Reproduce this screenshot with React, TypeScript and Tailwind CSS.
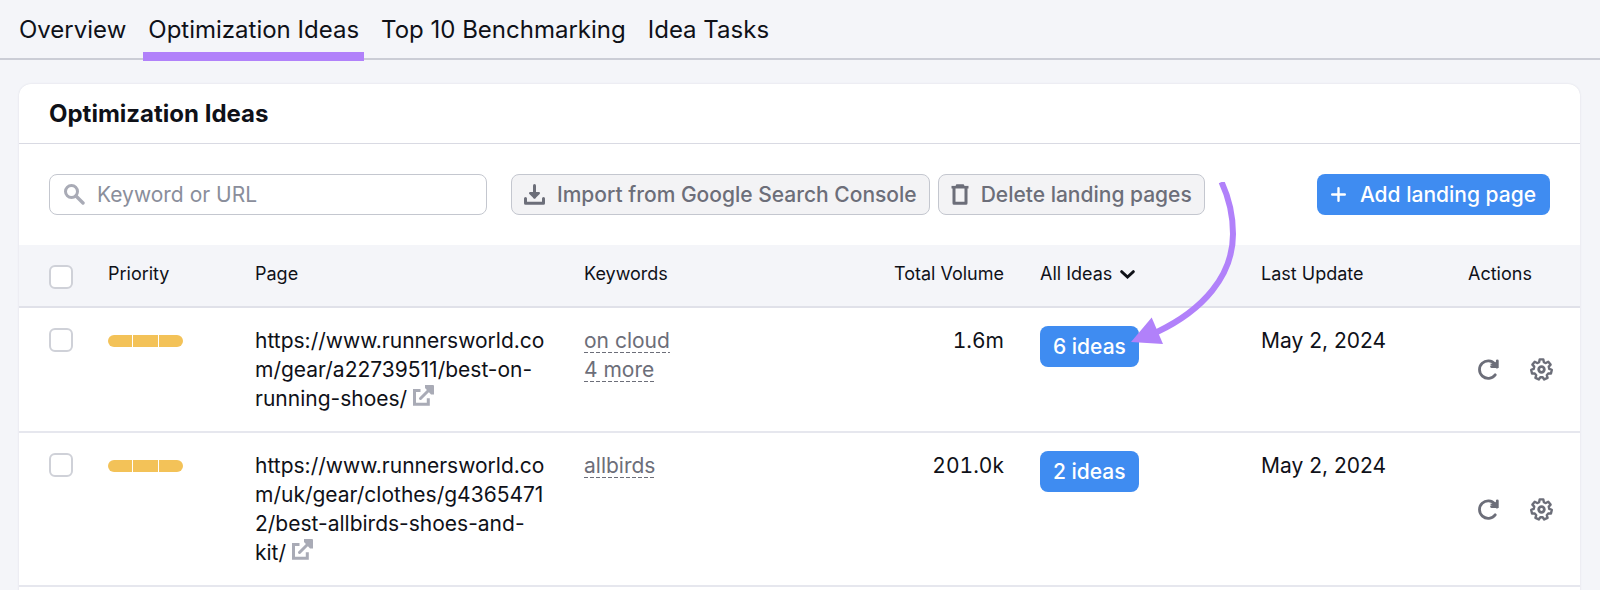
import { useState } from "react";
import type { ReactNode } from "react";

type IdeaRow = {
  id: string;
  url: string;
  keywords: string[];
  volume: string;
  ideas: number;
  updated: string;
  highlighted?: boolean;
};

const tabs = [
  "Overview",
  "Optimization Ideas",
  "Top 10 Benchmarking",
  "Idea Tasks",
];

const rows: IdeaRow[] = [
  {
    id: "on-running-shoes",
    url: "https://www.runnersworld.com/gear/a22739511/best-on-running-shoes/",
    keywords: ["on cloud", "4 more"],
    volume: "1.6m",
    ideas: 6,
    updated: "May 2, 2024",
    highlighted: true,
  },
  {
    id: "allbirds-shoes",
    url: "https://www.runnersworld.com/uk/gear/clothes/g43654712/best-allbirds-shoes-and-kit/",
    keywords: ["allbirds"],
    volume: "201.0k",
    ideas: 2,
    updated: "May 2, 2024",
  },
];

function SearchIcon() {
  return (
    <svg width="21" height="21" viewBox="0 0 21 21" fill="none" stroke="#a9abb6" aria-hidden="true">
      <circle cx="7.5" cy="7.5" r="6" strokeWidth="3" />
      <path d="M12 12l7 7" strokeWidth="3.4" strokeLinecap="round" />
    </svg>
  );
}

function ImportIcon() {
  return (
    <svg width="21" height="21" viewBox="0 0 21 21" fill="none" stroke="#6c6e79" strokeWidth="3" strokeLinecap="round" strokeLinejoin="round" aria-hidden="true">
      <path d="M10.5 1.5V13" />
      <path d="M6.2 9.2l4.3 4.3l4.3-4.3z" fill="#6c6e79" strokeWidth="2.4" />
      <path d="M1.5 14.5v4.7h18v-4.7" />
    </svg>
  );
}

function TrashIcon() {
  return (
    <svg width="18" height="21" viewBox="0 0 18 21" fill="none" stroke="#6c6e79" aria-hidden="true">
      <path d="M6 1.5h6" strokeWidth="2.5" strokeLinecap="round" />
      <path d="M0.5 3.2h17" strokeWidth="2.6" />
      <path d="M3 3.5v15.7h12V3.5" strokeWidth="3" strokeLinejoin="round" />
    </svg>
  );
}

function PlusIcon() {
  return (
    <svg width="15" height="15" viewBox="0 0 15 15" fill="none" stroke="white" strokeWidth="2.4" strokeLinecap="round" aria-hidden="true">
      <path d="M7.5 1.2v12.6M1.2 7.5h12.6" />
    </svg>
  );
}

function ChevronIcon() {
  return (
    <svg width="15" height="9" viewBox="0 0 15 9" fill="none" stroke="#0f1118" strokeWidth="2.8" strokeLinecap="round" aria-hidden="true">
      <path d="M1.6 1.6l5.9 5.4l5.9-5.4" />
    </svg>
  );
}

function ExternalIcon() {
  return (
    <svg className="inline-block align-baseline" width="21" height="21" viewBox="0 0 21 21" aria-hidden="true">
      <path d="M7.5 5.5h-6v13.8h13.800v-6" fill="none" stroke="#a9abb6" strokeWidth="3" />
      <path d="M7.5 13.5L17 4" fill="none" stroke="#a9abb6" strokeWidth="3" strokeLinecap="round" />
      <path d="M12 0H20a1 1 0 0 1 1 1v8.500h-3l-6-6.500z" fill="#a9abb6" />
    </svg>
  );
}

function RefreshIcon() {
  return (
    <svg width="21" height="21" viewBox="0 0 21 21" fill="none" stroke="#6c6e79" strokeWidth="2.8" strokeLinecap="round" aria-hidden="true">
      <path d="M17.2 15.8A8.7 8.7 0 1 1 17 5.2" />
      <path d="M19.3 1.8V7.6H13.5" />
      <path d="M15 5.5l3-1v3z" />
    </svg>
  );
}

// Seven teeth: each one is an outer edge joined to the next by a shallow valley.
const gearPath =
  Array.from({ length: 7 }, (_, i) => {
    const center = (i * 2 * Math.PI) / 7 - Math.PI / 2;
    return [
      [7.8, -0.3],
      [10.3, -0.18],
      [10.3, 0.18],
      [7.8, 0.3],
    ]
      .map(([r, a], j) => {
        const x = 11.5 + r * Math.cos(center + a);
        const y = 11.5 + r * Math.sin(center + a);
        return `${i + j === 0 ? "M" : "L"}${x.toFixed(2)} ${y.toFixed(2)}`;
      })
      .join("");
  }).join("") + "Z";

function GearIcon() {
  return (
    <svg width="23" height="23" viewBox="0 0 23 23" fill="none" stroke="#6c6e79" strokeWidth="2.4" strokeLinejoin="round" aria-hidden="true">
      <path d={gearPath} />
      <circle cx="11.5" cy="11.5" r="2.8" strokeWidth="2.8" />
    </svg>
  );
}

function PointerArrow() {
  return (
    <svg
      className="pointer-events-none absolute -top-36 left-[91px] z-10"
      width="108"
      height="164"
      viewBox="0 2 108 164"
      fill="none"
      aria-hidden="true"
    >
      <path d="M90.5 2C98 18 102 36 102 54C102 96 72 130 26 152" stroke="#b181fa" strokeWidth="6" />
      <path d="M0 162L20.7 137.5L32 164z" fill="#b181fa" />
    </svg>
  );
}

function Checkbox({ label }: { label: string }) {
  return (
    <input
      type="checkbox"
      aria-label={label}
      className="block size-6 appearance-none rounded-md border-2 border-[#cfd1d8] bg-white checked:bg-[#3f8cf1]"
    />
  );
}

function ToolButton({ icon, children }: { icon: ReactNode; children: ReactNode }) {
  return (
    <button
      type="button"
      className="flex h-[41px] items-center gap-3 rounded-lg border border-[#c4c7cf] bg-[#f3f3f5] px-3 font-medium whitespace-nowrap text-[#6c6e79]"
    >
      {icon}
      {children}
    </button>
  );
}

function Priority() {
  return (
    <div role="img" aria-label="High priority" className="mt-[9px] flex h-3 w-[75px] gap-px overflow-hidden rounded-full">
      <span className="flex-1 bg-[#f3c258]" />
      <span className="flex-1 bg-[#f3c258]" />
      <span className="flex-1 bg-[#f3c258]" />
    </div>
  );
}

export default function App() {
  const [activeTab, setActiveTab] = useState("Optimization Ideas");
  const [query, setQuery] = useState("");

  return (
    <div className="min-h-screen bg-[#f4f5f9] font-[Inter,sans-serif] text-[21px] leading-[29px] text-[#0f1118]">
      <nav className="flex h-[60px] gap-3 border-b-2 border-[#cbcdd6] px-[14px] text-2xl">
        {tabs.map((tab) => (
          <button
            key={tab}
            type="button"
            onClick={() => setActiveTab(tab)}
            className={`h-[61px] border-b-9 px-[5px] pt-[7px] whitespace-nowrap ${
              tab === activeTab ? "border-[#b181fa]" : "border-transparent"
            }`}
          >
            {tab}
          </button>
        ))}
      </nav>

      <main className="pt-6 pr-5 pl-[19px]">
        <section className="rounded-t-xl bg-white shadow-[0_0_2px_#d9dae3]">
          <h1 className="border-b border-[#d9dae3] px-[30px] pt-[14px] pb-[13px] text-2xl font-bold">
            Optimization Ideas
          </h1>

          <div className="flex items-center px-[30px] py-[30px]">
            <label className="flex h-[41px] w-[438px] items-center gap-3 rounded-lg border border-[#c4c7cf] px-[14px]">
              <SearchIcon />
              <input
                type="text"
                aria-label="Keyword or URL"
                placeholder="Keyword or URL"
                value={query}
                onChange={(event) => setQuery(event.target.value)}
                className="min-w-0 flex-1 outline-none placeholder:text-[#8a8e9b]"
              />
            </label>
            <div className="ml-6 flex gap-2">
              <ToolButton icon={<ImportIcon />}>Import from Google Search Console</ToolButton>
              <ToolButton icon={<TrashIcon />}>Delete landing pages</ToolButton>
            </div>
            <button
              type="button"
              className="ml-auto flex h-[41px] items-center gap-[14px] rounded-lg bg-[#3f8cf1] px-[14px] font-medium whitespace-nowrap text-white"
            >
              <PlusIcon />
              Add landing page
            </button>
          </div>

          <table className="w-full table-fixed border-collapse text-left">
            <thead>
              <tr className="h-[62px] border-b-2 border-[#e0e1e9] bg-[#f4f5f9] align-top text-lg *:font-normal">
                <th className="w-[71px] pt-5 pl-[30px]">
                  <Checkbox label="Select all pages" />
                </th>
                <th className="w-[147px] px-[18px] pt-[15px]">Priority</th>
                <th className="w-[329px] px-[18px] pt-[15px]">Page</th>
                <th className="px-[18px] pt-[15px]">Keywords</th>
                <th className="w-[180px] px-[18px] pt-[15px] text-right">Total Volume</th>
                <th className="w-[221px] px-[18px] pt-[15px]">
                  <button type="button" className="flex items-center gap-2">
                    All Ideas
                    <ChevronIcon />
                  </button>
                </th>
                <th className="w-[207px] px-[18px] pt-[15px]">Last Update</th>
                <th className="w-[130px] px-[18px] pt-[15px]">Actions</th>
              </tr>
            </thead>
            <tbody>
              {rows.map((row) => (
                <tr key={row.id} className="border-b-2 border-[#e6e7ee] align-top">
                  <td className="pt-5 pl-[30px]">
                    <Checkbox label={`Select ${row.url}`} />
                  </td>
                  <td className="px-[18px] py-[18px]">
                    <Priority />
                  </td>
                  <td className="px-[18px] py-[18px] wrap-break-word">
                    {row.url}{" "}
                    <a href={row.url} aria-label="Open page">
                      <ExternalIcon />
                    </a>
                  </td>
                  <td className="px-[18px] py-[18px]">
                    {row.keywords.map((keyword) => (
                      <div key={keyword} className="flex h-[29px] items-center">
                        <button
                          type="button"
                          className="bg-[repeating-linear-gradient(90deg,#6c6e79_0px_4px,transparent_4px_6px)] bg-[length:100%_1px] bg-bottom bg-no-repeat leading-[25px] text-[#6c6e79]"
                        >
                          {keyword}
                        </button>
                      </div>
                    ))}
                  </td>
                  <td className="px-[18px] py-[18px] text-right tabular-nums">{row.volume}</td>
                  <td className="px-[18px] py-[18px]">
                    <div className="relative">
                      <button
                        type="button"
                        className="h-[41px] rounded-lg bg-[#3f8cf1] px-[13px] font-medium text-white"
                      >
                        {row.ideas} ideas
                      </button>
                      {row.highlighted && <PointerArrow />}
                    </div>
                  </td>
                  <td className="px-[18px] py-[18px]">{row.updated}</td>
                  <td className="pr-[27px] pl-[28px] align-middle">
                    <div className="flex items-center justify-between">
                      <button type="button" aria-label="Refresh">
                        <RefreshIcon />
                      </button>
                      <button type="button" aria-label="Settings">
                        <GearIcon />
                      </button>
                    </div>
                  </td>
                </tr>
              ))}
            </tbody>
          </table>
          <div className="h-6" />
        </section>
      </main>
    </div>
  );
}
